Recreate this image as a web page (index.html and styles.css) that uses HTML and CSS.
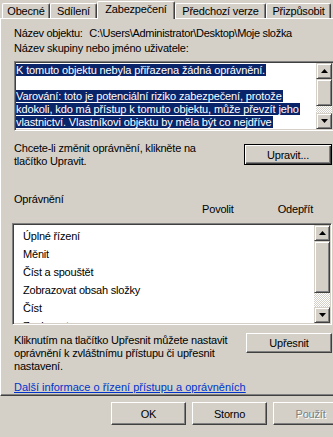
FILE: index.html
```html
<!DOCTYPE html>
<html lang="cs">
<head>
  <meta charset="UTF-8">
  <title>Vlastnosti – Moje složka</title>
  <link rel="stylesheet" href="styles.css">
</head>
<body>
  <div class="dialog">
    <!-- Tab strip -->
    <div class="tabs">
      <div class="tab">Obecné</div>
      <div class="tab">Sdílení</div>
      <div class="tab active">Zabezpečení</div>
      <div class="tab">Předchozí verze</div>
      <div class="tab">Přizpůsobit</div>
    </div>

    <!-- Security page -->
    <div class="panel">
      <div class="obj-name">
        <span>Název objektu:</span>
        <span class="path">C:\Users\Administrator\Desktop\Moje složka</span>
      </div>
      <div class="caption">Název skupiny nebo jméno uživatele:</div>

      <div class="field textbox">
        <div class="field-body">
          <div class="line"><span class="sel">K tomuto objektu nebyla přiřazena žádná oprávnění.</span></div>
          <div class="line"></div>
          <div class="line"><span class="sel">Varování: toto je potenciální riziko zabezpečení, protože</span></div>
          <div class="line"><span class="sel">kdokoli, kdo má přístup k tomuto objektu, může převzít jeho</span></div>
          <div class="line"><span class="sel">vlastnictví. Vlastníkovi objektu by měla být co nejdříve</span></div>
        </div>
        <div class="scrollbar">
          <div class="sb-btn"><svg width="7" height="4" viewBox="0 0 7 4"><polygon points="3.5,0 7,4 0,4" fill="#000"/></svg></div>
          <div class="sb-thumb short"></div>
          <div class="sb-track"></div>
          <div class="sb-btn"><svg width="7" height="4" viewBox="0 0 7 4"><polygon points="0,0 7,0 3.5,4" fill="#000"/></svg></div>
        </div>
      </div>

      <div class="action-row edit-row">
        <p>Chcete-li změnit oprávnění, klikněte na<br>tlačítko Upravit.</p>
        <button class="btn default">Upravit...</button>
      </div>

      <div class="perm-head">
        <span class="perm-title">Oprávnění</span>
        <span class="perm-col">Povolit</span>
        <span class="perm-col">Odepřít</span>
      </div>

      <div class="field listbox">
        <ul class="field-body perm-list">
          <li>Úplné řízení</li>
          <li>Měnit</li>
          <li>Číst a spouštět</li>
          <li>Zobrazovat obsah složky</li>
          <li>Číst</li>
          <li>Zapisovat</li>
        </ul>
        <div class="scrollbar">
          <div class="sb-btn"><svg width="7" height="4" viewBox="0 0 7 4"><polygon points="3.5,0 7,4 0,4" fill="#000"/></svg></div>
          <div class="sb-thumb long"></div>
          <div class="sb-track"></div>
          <div class="sb-btn"><svg width="7" height="4" viewBox="0 0 7 4"><polygon points="0,0 7,0 3.5,4" fill="#000"/></svg></div>
        </div>
      </div>

      <div class="action-row adv-row">
        <p>Kliknutím na tlačítko Upřesnit můžete nastavit<br>oprávnění k zvláštnímu přístupu či upřesnit<br>nastavení.</p>
        <button class="btn">Upřesnit</button>
      </div>

      <a class="help-link" href="#">Další informace o řízení přístupu a oprávněních</a>
    </div>

    <!-- Dialog buttons -->
    <div class="footer">
      <button class="btn wide">OK</button>
      <button class="btn wide">Storno</button>
      <button class="btn wide" disabled>Použít</button>
    </div>
  </div>
</body>
</html>
```

FILE: styles.css
```css
body {
  margin: 0;
  background: #d4d0c8;
  overflow: hidden;
  font-family: 'Liberation Sans', Arial, sans-serif;
  font-size: 11px;
  letter-spacing: -0.2px;
  color: #000;
}

.dialog {
  width: 356px;
  padding-top: 1px;
}

/* Tabs */
.tabs {
  display: flex;
  align-items: flex-end;
  height: 17px;
  padding-left: 2px;
  position: relative;
  z-index: 1;
}

.tab {
  box-sizing: border-box;
  height: 15px;
  line-height: 15px;
  text-align: center;
  border-top: 1px solid #fff;
  border-left: 1px solid #fff;
  border-right: 1px solid #404040;
  box-shadow: inset -1px 0 #808080;
  border-radius: 2px 2px 0 0;
  background: #d4d0c8;
}

.tab:nth-child(1) { width: 48px; }
.tab:nth-child(2) { width: 47px; }
.tab:nth-child(3) { width: 78px; }
.tab:nth-child(4) { width: 91px; }
.tab:nth-child(5) { width: 65px; }

.tab.active {
  height: 18px;
  line-height: 14px;
  margin-bottom: -1px;
}

/* Panel */
.panel {
  border-top: 1px solid #fff;
  border-left: 1px solid #fff;
  border-bottom: 1px solid #404040;
  box-shadow: inset 0 -1px #808080;
  padding: 8px 23px 1px 13px;
}

.obj-name {
  line-height: 13px;
  margin-bottom: 2px;
  letter-spacing: -0.3px;
}

.obj-name .path {
  margin-left: 4px;
}

.caption {
  line-height: 13px;
  margin-bottom: 6px;
}

/* Sunken fields */
.field {
  display: flex;
  background: #fff;
  border-top: 1px solid #808080;
  border-left: 1px solid #808080;
  border-right: 1px solid #fff;
  border-bottom: 1px solid #fff;
  box-shadow: inset 1px 1px #404040, inset -1px -1px #d4d0c8;
  padding: 1px;
}

.field-body {
  flex: 1;
  overflow: hidden;
  margin: 0;
}

.textbox {
  width: 316px;
  height: 66px;
}

.textbox .field-body {
  padding-top: 1px;
  letter-spacing: -0.12px;
}

.line {
  height: 13px;
  line-height: 13px;
  white-space: nowrap;
}

.sel {
  background: #0a246a;
  color: #fff;
  padding-right: 1px;
}

.listbox {
  width: 316px;
  height: 98px;
  margin-left: -2px;
}

.perm-list {
  list-style: none;
  padding: 2px 0 0 9px;
}

.perm-list li {
  height: 18px;
  line-height: 18px;
  white-space: nowrap;
}

/* Scrollbar */
.scrollbar {
  width: 16px;
  display: flex;
  flex-direction: column;
}

.sb-btn,
.sb-thumb {
  box-sizing: border-box;
  background: #d4d0c8;
  border-top: 1px solid #d4d0c8;
  border-left: 1px solid #d4d0c8;
  border-right: 1px solid #404040;
  border-bottom: 1px solid #404040;
  box-shadow: inset 1px 1px #fff, inset -1px -1px #808080;
}

.sb-btn {
  height: 16px;
  display: flex;
  align-items: center;
  justify-content: center;
}

.sb-thumb.short {
  height: 27px;
}

.sb-thumb.long {
  height: 52px;
}

.sb-track {
  flex: 1;
  background: repeating-conic-gradient(#fff 0 25%, #d4d0c8 0 50%) 0 0 / 2px 2px;
}

/* Text + button rows */
.action-row {
  display: flex;
  justify-content: space-between;
  align-items: flex-start;
}

.action-row p {
  margin: 0;
  line-height: 13px;
}

.edit-row {
  margin-top: 11px;
}

.edit-row .btn {
  margin-top: 2px;
  margin-right: 1px;
}

.adv-row {
  margin-top: 9px;
}

.adv-row .btn {
  margin-top: -1px;
  margin-right: 1px;
  width: 86px;
  height: 20px;
}

.perm-head {
  display: flex;
  align-items: flex-end;
  height: 23px;
  margin-top: 25px;
  margin-bottom: 7px;
  line-height: 13px;
}

.perm-title {
  align-self: flex-start;
  flex: 1;
}

.perm-col {
  margin-right: 44px;
}

.perm-col + .perm-col {
  margin-right: 20px;
}

.help-link {
  display: block;
  margin-top: 8px;
  line-height: 13px;
  color: #0033cc;
  letter-spacing: 0;
}

/* Buttons */
.btn {
  font: inherit;
  letter-spacing: inherit;
  color: #000;
  background: #d4d0c8;
  box-sizing: border-box;
  width: 88px;
  height: 21px;
  padding: 0;
  border-top: 1px solid #fff;
  border-left: 1px solid #fff;
  border-right: 1px solid #404040;
  border-bottom: 1px solid #404040;
  box-shadow: inset -1px -1px #808080;
}

.btn.default {
  border: 1px solid #000;
  box-shadow: inset 1px 1px #fff, inset -1px -1px #404040, inset -2px -2px #808080;
}

.btn:disabled {
  color: #808080;
  text-shadow: 1px 1px #fff;
}

.footer {
  display: flex;
  justify-content: flex-end;
  gap: 6px;
  padding: 6px 8px 0 0;
}

.btn.wide {
  width: 75px;
  height: 23px;
}
```
